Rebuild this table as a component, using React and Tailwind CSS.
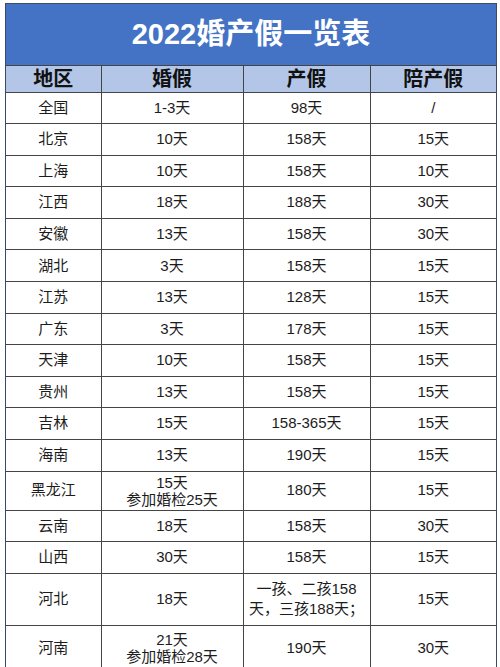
import React from 'react';

const rows = [
  { region: '全国', marriage: '1-3天', maternity: '98天', paternity: '/' },
  { region: '北京', marriage: '10天', maternity: '158天', paternity: '15天' },
  { region: '上海', marriage: '10天', maternity: '158天', paternity: '10天' },
  { region: '江西', marriage: '18天', maternity: '188天', paternity: '30天' },
  { region: '安徽', marriage: '13天', maternity: '158天', paternity: '30天' },
  { region: '湖北', marriage: '3天', maternity: '158天', paternity: '15天' },
  { region: '江苏', marriage: '13天', maternity: '128天', paternity: '15天' },
  { region: '广东', marriage: '3天', maternity: '178天', paternity: '15天' },
  { region: '天津', marriage: '10天', maternity: '158天', paternity: '15天' },
  { region: '贵州', marriage: '13天', maternity: '158天', paternity: '15天' },
  { region: '吉林', marriage: '15天', maternity: '158-365天', paternity: '15天' },
  { region: '海南', marriage: '13天', maternity: '190天', paternity: '15天' },
  { region: '黑龙江', marriage: ['15天', '参加婚检25天'], maternity: '180天', paternity: '15天', h: 'h-[39px]' },
  { region: '云南', marriage: '18天', maternity: '158天', paternity: '30天' },
  { region: '山西', marriage: '30天', maternity: '158天', paternity: '15天' },
  { region: '河北', marriage: '18天', maternity: ['一孩、二孩158', '天，三孩188天；'], paternity: '15天', h: 'h-[52px]', wide: true },
  { region: '河南', marriage: ['21天', '参加婚检28天'], maternity: '190天', paternity: '30天', h: 'h-[46px]' },
];

const Cell = ({ value, wide }) => {
  if (Array.isArray(value)) {
    return (
      <div className={wide ? 'leading-[20px]' : 'leading-[17px]'}>
        {value.map((line, i) => (
          <div key={i}>{line}</div>
        ))}
      </div>
    );
  }
  return value;
};

const App = () => {
  const font = { fontFamily: '"Liberation Sans", "Noto Sans CJK SC", sans-serif' };
  return (
    <div className="w-[500px] h-[667px] bg-white overflow-hidden pt-[3px] pl-[5px]" style={font}>
      <div className="w-[492px] border-[1.5px] border-[#3a4a6a] border-b-0">
        {/* title */}
        <div className="h-[61px] bg-[#4472c4] flex items-center justify-center">
          <span className="text-white font-bold text-[29px]">2022婚产假一览表</span>
        </div>

        <table className="w-full table-fixed border-collapse text-center text-[#1c1c1c]">
          <colgroup>
            <col className="w-[95px]" />
            <col className="w-[142px]" />
            <col className="w-[127px]" />
            <col />
          </colgroup>
          <thead>
            <tr className="h-[26.5px] bg-[#b4c6e7] text-[20px] font-bold text-[#111]">
              <th className="border-[1.5px] border-[#444] border-l-0 p-0 leading-none">地区</th>
              <th className="border-[1.5px] border-[#444] p-0 leading-none">婚假</th>
              <th className="border-[1.5px] border-[#444] p-0 leading-none">产假</th>
              <th className="border-[1.5px] border-[#444] border-r-0 p-0 leading-none">陪产假</th>
            </tr>
          </thead>
          <tbody className="text-[15px]">
            {rows.map((r) => (
              <tr key={r.region} className={r.h || 'h-[31.6px]'}>
                <td className="border-[1.5px] border-[#444] border-l-0 p-0">{r.region}</td>
                <td className="border-[1.5px] border-[#444] p-0">
                  <Cell value={r.marriage} />
                </td>
                <td className="border-[1.5px] border-[#444] p-0">
                  <Cell value={r.maternity} wide={r.wide} />
                </td>
                <td className="border-[1.5px] border-[#444] border-r-0 p-0">{r.paternity}</td>
              </tr>
            ))}
          </tbody>
        </table>
      </div>
    </div>
  );
};

export default App;
